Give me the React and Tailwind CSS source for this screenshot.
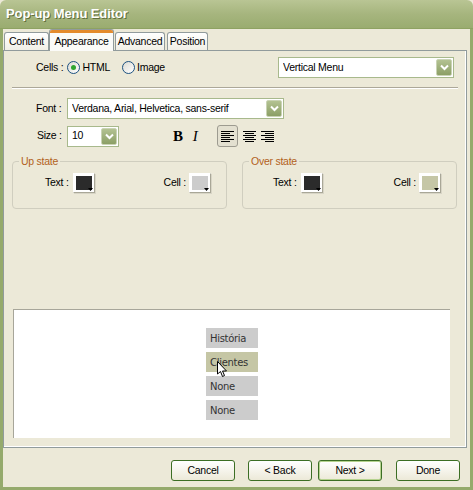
import React from 'react';

function Chevron() {
  return (
    <svg width="9" height="7" viewBox="0 0 9 7">
      <path d="M1 1.5 L4.5 5 L8 1.5" fill="none" stroke="#fff" strokeWidth="2" />
    </svg>
  );
}

function Select({ className, value }) {
  return (
    <div className={`flex items-center h-[21px] border border-[#a8b98c] bg-white pl-[4px] pr-[1px] ${className}`}>
      <span className="flex-1 truncate">{value}</span>
      <div className="w-[16px] h-[17px] rounded-[2px] border border-[#c9d3b4] bg-gradient-to-b from-[#b3c292] to-[#8c9f66] flex items-center justify-center">
        <Chevron />
      </div>
    </div>
  );
}

function Radio({ checked }) {
  return (
    <div className="w-[13px] h-[13px] rounded-full border border-[#1c5180] bg-gradient-to-br from-[#dcdbd3] to-white flex items-center justify-center">
      {checked && <div className="w-[5px] h-[5px] rounded-full bg-[#2fa52f]" />}
    </div>
  );
}

function Swatch({ fill }) {
  return (
    <div className="relative w-[22px] h-[20px] border border-t-white border-l-white border-r-[#a9a797] border-b-[#a9a797] bg-white p-[2px] shadow-[1px_1px_0_#d8d5c6]">
      <div className={`w-full h-full ${fill}`} />
      <svg className="absolute right-[1px] bottom-[1px]" width="5" height="3" viewBox="0 0 5 3">
        <path d="M0 0 H5 L2.5 3 Z" fill="#000" />
      </svg>
    </div>
  );
}

function AlignIcon({ kind }) {
  const rows = [0, 2, 4, 6, 8, 10];
  const len = [13, 9, 13, 9, 13, 9];
  return (
    <svg width="13" height="11" viewBox="0 0 13 11">
      {rows.map((y, i) => {
        const l = len[i];
        const x = kind === 'left' ? 0 : kind === 'right' ? 13 - l : (13 - l) / 2;
        return <rect key={i} x={x} y={y} width={l} height="1" fill="#000" />;
      })}
    </svg>
  );
}

function StateBox({ title, textFill, cellFill, pl }) {
  return (
    <fieldset className="w-[215px] h-[54px] border border-[#d0cebf] rounded-[4px] px-0 pb-0">
      <legend className="ml-[6px] px-[2px] text-[#b2611c] leading-[13px]">{title}</legend>
      <div className={`flex items-center pt-[5px] pr-[15px] ${pl}`}>
        <span className="mr-[4px]">Text :</span>
        <Swatch fill={textFill} />
        <span className="ml-auto mr-[3px]">Cell :</span>
        <Swatch fill={cellFill} />
      </div>
    </fieldset>
  );
}

function Tab({ label, active, className }) {
  if (active) {
    return (
      <div className={`relative z-10 h-[22px] -mb-[1px] border border-b-0 border-[#919b9c] rounded-t-[3px] bg-[#fbfbf8] overflow-hidden flex items-start justify-center ${className}`}>
        <div className="absolute top-0 left-0 right-0 h-[3px] bg-[#e48b2c]" />
        <span className="pt-[4px]">{label}</span>
      </div>
    );
  }
  return (
    <div className={`h-[18px] border border-b-0 border-[#919b9c] rounded-t-[3px] bg-gradient-to-b from-white to-[#f1efe6] flex items-center justify-center ${className}`}>
      {label}
    </div>
  );
}

function Button({ label, focused }) {
  return (
    <div className={`w-[64px] h-[21px] rounded-[3px] border border-[#3c6e24] bg-gradient-to-b from-white to-[#ece9d8] flex items-center justify-center ${focused ? 'shadow-[inset_0_0_0_1px_#b6d38f]' : ''}`}>
      {label}
    </div>
  );
}

export default function App() {
  return (
    <div className="w-[473px] h-[490px] flex flex-col bg-[#ece9d8] font-['Liberation_Sans',Arial,sans-serif] text-[10.5px] tracking-[-0.25px] text-black overflow-hidden">
      {/* title bar */}
      <div className="h-[29px] shrink-0 rounded-t-[6px] bg-gradient-to-b from-[#b9c594] via-[#a6b57e] to-[#9aac70] border-b border-[#8ea262] flex items-center pl-[6px]">
        <span className="font-bold text-[13px] text-white [text-shadow:1px_1px_0_#5f6e3c] tracking-[-0.1px]">Pop-up Menu Editor</span>
      </div>

      <div className="flex-1 flex flex-col border-x-[3px] border-b-[3px] border-[#95aa6c]">
        {/* tabs */}
        <div className="h-[21px] flex items-end pl-[1px]">
          <Tab label="Content" className="w-[45px]" />
          <Tab label="Appearance" active className="w-[65px]" />
          <Tab label="Advanced" className="w-[50px] ml-[1px]" />
          <Tab label="Position" className="w-[41px] ml-[2px]" />
        </div>

        {/* panel */}
        <div className="w-[464px] h-[398px] border border-[#919b9c] shadow-[inset_-1px_-1px_0_#fff] bg-[#ece9d8] flex flex-col">
          <div className="flex items-center h-[21px] mt-[6px]">
            <span className="ml-[32px]">Cells :</span>
            <div className="ml-[4px]"><Radio checked /></div>
            <span className="ml-[2px]">HTML</span>
            <div className="ml-[12px]"><Radio /></div>
            <span className="ml-[2px]">Image</span>
            <Select className="w-[176px] ml-auto mr-[12px]" value="Vertical Menu" />
          </div>

          <div className="ml-[8px] w-[446px] h-[2px] mt-[9px] border-t border-[#aca899] border-b border-b-white" />

          <div className="flex items-center h-[21px] mt-[9px]">
            <span className="ml-[32px] w-[31px]">Font :</span>
            <Select className="w-[217px]" value="Verdana, Arial, Helvetica, sans-serif" />
          </div>

          <div className="flex items-center h-[22px] mt-[6px]">
            <span className="ml-[33px] w-[30px]">Size :</span>
            <Select className="w-[52px]" value="10" />
            <span className="ml-[54px] font-['Liberation_Serif',serif] font-bold text-[15px]">B</span>
            <span className="ml-[10px] font-['Liberation_Serif',serif] italic text-[15px]">I</span>
            <div className="ml-[19px] w-[21px] h-[22px] rounded-[3px] border border-[#9d9b90] bg-[#e3e0d0] flex items-center justify-center">
              <AlignIcon kind="left" />
            </div>
            <div className="ml-[5px]"><AlignIcon kind="center" /></div>
            <div className="ml-[5px]"><AlignIcon kind="right" /></div>
          </div>

          <div className="flex mt-[8px] ml-[8px] gap-[15px]">
            <StateBox title="Up state" textFill="bg-[#2b2b2b]" cellFill="bg-[#cccccc]" pl="pl-[32px]" />
            <StateBox title="Over state" textFill="bg-[#2b2b2b]" cellFill="bg-[#c5c6a6]" pl="pl-[30px]" />
          </div>

          {/* preview */}
          <div className="ml-[9px] mt-[100px] w-[437px] h-[129px] bg-white border-t border-l border-[#a7a69a] flex justify-center pt-[18px]">
            <div className="relative flex flex-col gap-[4px] w-[52px] text-[10px] text-[#333] font-['DejaVu_Sans',sans-serif] tracking-[-0.3px]">
              <div className="h-[20px] bg-[#cccccc] flex items-center pl-[4px]">História</div>
              <div className="h-[20px] bg-[#c5c6a5] flex items-center pl-[4px]">Clientes</div>
              <div className="h-[20px] bg-[#cccccc] flex items-center pl-[4px]">None</div>
              <div className="h-[20px] bg-[#cccccc] flex items-center pl-[4px]">None</div>
              <svg className="absolute left-[11px] top-[33px]" width="11" height="17" viewBox="0 0 11 17">
                <path d="M0.5 0.5 L0.5 13 L3.5 10.5 L5.5 15.5 L7.5 14.5 L5.5 10 L9.5 10 Z" fill="#fff" stroke="#000" strokeWidth="1" />
              </svg>
            </div>
          </div>
        </div>

        {/* buttons */}
        <div className="flex justify-end items-start pt-[12px] pr-[10px]">
          <Button label="Cancel" />
          <div className="ml-[13px]"><Button label="< Back" /></div>
          <div className="ml-[6px]"><Button label="Next >" focused /></div>
          <div className="ml-[14px]"><Button label="Done" /></div>
        </div>
      </div>
    </div>
  );
}
